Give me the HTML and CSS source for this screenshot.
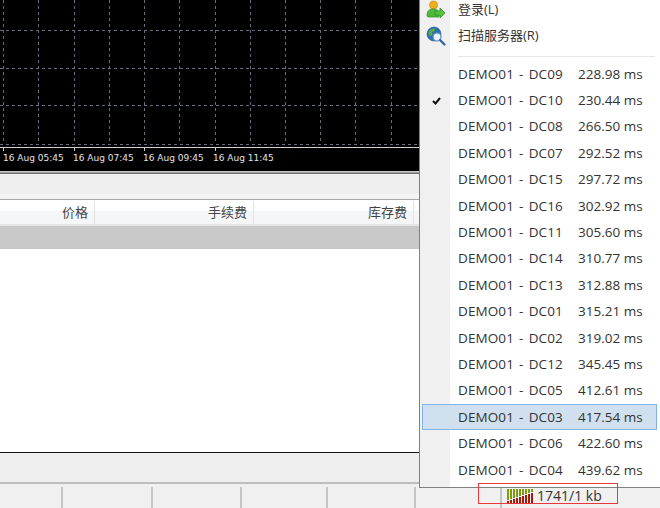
FILE: index.html
```html
<!DOCTYPE html>
<html lang="zh">
<head>
<meta charset="utf-8">
<title>Trading terminal</title>
<link rel="stylesheet" href="styles.css">
</head>
<body>
<div class="app">
  <section class="chart">
    <svg class="plot" width="420" height="147" viewBox="0 0 420 147">
      <g class="grid">
        <path d="M0 30H420M0 68H420M0 105.500H420M0 144H420"/>
        <path d="M3.500 0V144M38.500 0V144M74 0V144M109 0V144M144.500 0V144M179.500 0V144M215 0V144M250 0V144M285.500 0V144M320.500 0V144M355.500 0V144M391 0V144"/>
      </g>
    </svg>
    <svg class="ruler" width="420" height="4" viewBox="0 0 420 4">
      <path class="axis" d="M0 .500H420M3.500 0V4M74 0V4M144.500 0V4M215 0V4"/>
    </svg>
    <div class="times">
      <span>16 Aug 05:45</span><span>16 Aug 07:45</span><span>16 Aug 09:45</span><span>16 Aug 11:45</span>
    </div>
  </section>
  <div class="divider"></div>
  <div class="tabs"></div>
  <div class="table-head">
    <div class="col c1">价格</div>
    <div class="col c2">手续费</div>
    <div class="col c3">库存费</div>
  </div>
  <div class="summary"></div>
  <div class="table-body"></div>
  <div class="toolbar"></div>
  <footer class="status">
    <div class="cell s1"></div>
    <div class="cell s2"></div>
    <div class="cell s3"></div>
    <div class="cell s4"></div>
    <div class="cell s5"></div>
    <div class="cell s6"></div>
    <div class="cell s7">
      <svg class="net" width="27" height="15" viewBox="0 0 27 15">
        <g class="net-green"><rect x="0" y="0" width="2" height="11"/><rect x="3" y="0" width="2" height="10"/><rect x="6" y="0" width="2" height="9"/><rect x="9" y="0" width="2" height="8"/><rect x="12" y="0" width="2" height="7"/><rect x="15" y="0" width="2" height="6"/><rect x="18" y="0" width="2" height="5"/><rect x="21" y="0" width="2" height="4"/><rect x="24" y="0" width="2" height="3"/></g>
        <g class="net-red"><rect x="0" y="12" width="2" height="3"/><rect x="3" y="11" width="2" height="4"/><rect x="6" y="10" width="2" height="5"/><rect x="9" y="9" width="2" height="6"/><rect x="12" y="8" width="2" height="7"/><rect x="15" y="7" width="2" height="8"/><rect x="18" y="6" width="2" height="9"/><rect x="21" y="5" width="2" height="10"/><rect x="24" y="4" width="2" height="11"/></g>
      </svg>
      <span class="kb">1741/1 kb</span>
    </div>
  </footer>
</div>

<div class="annot"></div>

<nav class="menu">
  <div class="item">
    <span class="gut">
      <svg width="20" height="20" viewBox="0 0 20 20">
        <circle cx="7.500" cy="5" r="4" fill="#f2b01e" stroke="#c98a10" stroke-width=".7"/>
        <path d="M1 16c0-5 2-7 6-7 3 0 5 1 6 3v5H2z" fill="#4fb83a" stroke="#2f8a26" stroke-width=".7"/>
        <path d="M9 11h5V8l5 5-5 5v-3H9z" fill="#58c23f" stroke="#2f8a26" stroke-width=".8"/>
      </svg>
    </span>
    <span class="label">登录(L)</span>
  </div>
  <div class="item">
    <span class="gut">
      <svg width="20" height="20" viewBox="0 0 20 20">
        <circle cx="8" cy="8" r="7" fill="#2c6fb8" stroke="#1d4f8a" stroke-width=".6"/>
        <path d="M3 5c2-2 4-3 6-2 0 2-1 3-3 3 1 2 0 4-2 4-1-1-2-3-1-5z" fill="#58ad3c"/>
        <circle cx="11" cy="11" r="4" fill="#e8f3fb" stroke="#5a8cb8" stroke-width="1.200"/>
        <path d="M14 14l4.500 4.500" stroke="#2f62a0" stroke-width="2.200" stroke-linecap="round"/>
      </svg>
    </span>
    <span class="label">扫描服务器(R)</span>
  </div>
  <div class="sep"></div>
  <div class="item srv"><span class="gut"></span><span class="name">DEMO01 - DC09</span><span class="ping">228.98 ms</span></div>
  <div class="item srv"><span class="gut"><svg width="9" height="8" viewBox="0 0 9 8"><path d="M1 4l2.500 2.500L8 1" fill="none" stroke="#111" stroke-width="2"/></svg></span><span class="name">DEMO01 - DC10</span><span class="ping">230.44 ms</span></div>
  <div class="item srv"><span class="gut"></span><span class="name">DEMO01 - DC08</span><span class="ping">266.50 ms</span></div>
  <div class="item srv"><span class="gut"></span><span class="name">DEMO01 - DC07</span><span class="ping">292.52 ms</span></div>
  <div class="item srv"><span class="gut"></span><span class="name">DEMO01 - DC15</span><span class="ping">297.72 ms</span></div>
  <div class="item srv"><span class="gut"></span><span class="name">DEMO01 - DC16</span><span class="ping">302.92 ms</span></div>
  <div class="item srv"><span class="gut"></span><span class="name">DEMO01 - DC11</span><span class="ping">305.60 ms</span></div>
  <div class="item srv"><span class="gut"></span><span class="name">DEMO01 - DC14</span><span class="ping">310.77 ms</span></div>
  <div class="item srv"><span class="gut"></span><span class="name">DEMO01 - DC13</span><span class="ping">312.88 ms</span></div>
  <div class="item srv"><span class="gut"></span><span class="name">DEMO01 - DC01</span><span class="ping">315.21 ms</span></div>
  <div class="item srv"><span class="gut"></span><span class="name">DEMO01 - DC02</span><span class="ping">319.02 ms</span></div>
  <div class="item srv"><span class="gut"></span><span class="name">DEMO01 - DC12</span><span class="ping">345.45 ms</span></div>
  <div class="item srv"><span class="gut"></span><span class="name">DEMO01 - DC05</span><span class="ping">412.61 ms</span></div>
  <div class="item srv active"><span class="gut"></span><span class="name">DEMO01 - DC03</span><span class="ping">417.54 ms</span></div>
  <div class="item srv"><span class="gut"></span><span class="name">DEMO01 - DC06</span><span class="ping">422.60 ms</span></div>
  <div class="item srv"><span class="gut"></span><span class="name">DEMO01 - DC04</span><span class="ping">439.62 ms</span></div>
</nav>
</body>
</html>
```
FILE: styles.css
```css
* { box-sizing: border-box; }
html, body { margin: 0; padding: 0; height: 100%; overflow: hidden; }
body {
  position: relative;
  width: 660px;
  height: 508px;
  background: #f0f0f0;
  font-family: "Open Sans", "Noto Sans CJK SC", sans-serif;
  font-size: 13px;
  color: #333;
}
.app { display: flex; flex-direction: column; height: 508px; }

.chart { height: 171px; background: #000; flex: none; }
.plot, .ruler { display: block; }
.grid path { fill: none; stroke: #62707d; stroke-width: 1; stroke-dasharray: 3 3; shape-rendering: crispEdges; }
.axis { fill: none; stroke: #d0d0d0; stroke-width: 1; shape-rendering: crispEdges; }
.times {
  display: flex;
  gap: 10px;
  padding: 0 0 0 3px;
  font-family: "DejaVu Sans", sans-serif;
  font-size: 9px;
  line-height: 14px;
  color: #e4e4e4;
}
.times span { width: 60px; white-space: nowrap; }

.divider { height: 3px; flex: none; background: #a0a0a0; border-top: 1px solid #c8c8c8; border-bottom: 1px solid #707070; }
.tabs { height: 26px; flex: none; background: linear-gradient(#efefef 20px, #f4f4f4 20px); border-bottom: 1px solid #a8a8a8; }
.table-head {
  display: flex;
  height: 26px;
  flex: none;
  background: linear-gradient(#fff 9px, #f5f6f7 10px);
  border-bottom: 2px solid #e6e6e6;
  border-top: 1px solid #fff;
}
.col { text-align: right; line-height: 22px; padding-right: 6px; border-right: 1px solid #e2e2e2; color: #444; }
.c1 { width: 95px; }
.c2 { width: 159px; }
.c3 { width: 160px; }
.summary { height: 23px; flex: none; background: #c8c8c8; }
.table-body { height: 204px; flex: none; background: #fff; border-bottom: 1px solid #111; }
.toolbar { height: 31px; flex: none; background: #efefef; border-bottom: 2px solid #bdbdbd; }

.status { display: flex; flex: 1; padding-top: 3px; background: #f0f0f0; }
.cell { height: 21px; border-right: 2px solid #c4c4c4; flex: none; }
.s1 { width: 63px; }
.s2 { width: 90px; }
.s3 { width: 89px; }
.s4 { width: 86px; }
.s5 { width: 88px; }
.s6 { width: 86px; }
.s7 { border: 0; flex: 1; height: 18px; display: flex; align-items: center; padding-left: 5px; gap: 3px; }
.net { display: block; }
.net-green { fill: #7f9a10; }
.net-red { fill: #a41c0c; }
.kb { font-size: 14px; color: #333; padding-bottom: 2px; }

.annot { position: absolute; left: 478px; top: 483px; width: 140px; height: 21px; border: 1px solid #e8383c; z-index: 3; }

.menu {
  position: absolute;
  left: 419px;
  top: -3px;
  width: 242px;
  height: 491px;
  padding: 0 0 3px 1px;
  border: 1px solid #808080;
  border-top: 0;
  background: linear-gradient(90deg, #f0f0f0 30px, #fff 30px);
  z-index: 2;
}
.item { display: flex; align-items: center; height: 26px; padding: 0 2px; }
.srv { height: 26.400px; }
.gut { width: 35px; padding: 0 12px 0 3px; flex: none; display: flex; justify-content: center; align-items: center; }
.label, .name, .ping { white-space: nowrap; color: #333; }
.label { padding-bottom: 4px; }
.name, .ping { font-size: 13.500px; padding-bottom: 1px; }
.name { width: 120px; word-spacing: 1.500px; letter-spacing: .1px; }
.sep { height: 1px; margin: 7px 5px 4px 37px; background: #e6e6e6; }
.active { background: #d1e0ee; outline: 1px solid #7eb4ea; outline-offset: -1px; margin: 0 3px 0 1px; padding: 0 0 0 1px; }
```
